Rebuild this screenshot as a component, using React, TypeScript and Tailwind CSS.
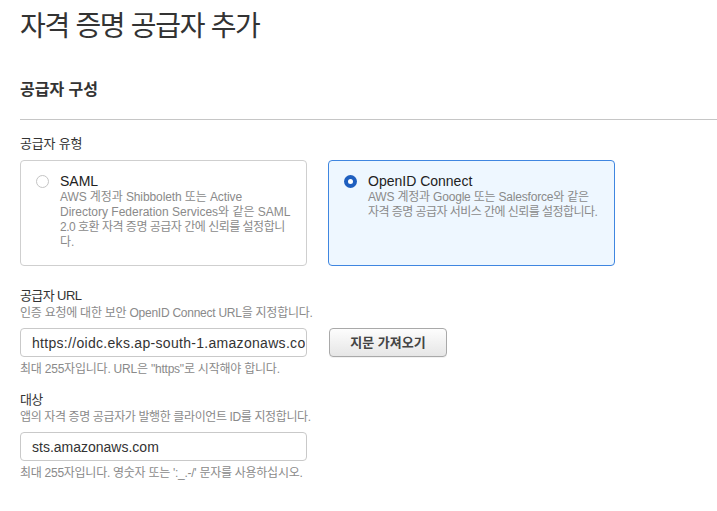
import React from 'react';

const font = { fontFamily: '"Liberation Sans", "Noto Sans CJK KR", sans-serif' };

type Line = { text: string; track: string };

function Radio({ checked }: { checked: boolean }) {
  if (checked) {
    return (
      <span className="mt-[2px] flex h-[13px] w-[13px] shrink-0 items-center justify-center rounded-full bg-[#1f5fbf]">
        <span className="h-[5px] w-[5px] rounded-full bg-white" />
      </span>
    );
  }
  return <span className="mt-[2px] h-[13px] w-[13px] shrink-0 rounded-full border border-[#c4c4c4] bg-white" />;
}

function ProviderCard({ title, lines, checked }: { title: string; lines: Line[]; checked: boolean }) {
  return (
    <div
      className={`flex h-[106px] w-[287px] gap-[11px] rounded-[4px] border pl-[15px] pt-[12px] ${
        checked ? 'border-[#3f86e0] bg-[#eef7ff]' : 'border-[#cfcfcf] bg-white'
      }`}
    >
      <Radio checked={checked} />
      <div>
        <div className="text-[14px] leading-[17px] text-[#222]">{title}</div>
        <div className="whitespace-nowrap text-[12px] leading-[15px] text-[#8a8a8a]">
          {lines.map((l) => (
            <div key={l.text} className={l.track}>
              {l.text}
            </div>
          ))}
        </div>
      </div>
    </div>
  );
}

function Field({
  label,
  help,
  helpTrack,
  value,
  valueTrack,
  hint,
  hintTrack,
  button,
}: {
  label: string;
  help: string;
  helpTrack: string;
  value: string;
  valueTrack: string;
  hint: string;
  hintTrack: string;
  button?: string;
}) {
  return (
    <div>
      <div className="text-[13px] leading-[18px] tracking-[-0.6px] text-[#333]">{label}</div>
      <div className={`whitespace-nowrap text-[12px] leading-[16px] text-[#8a8a8a] ${helpTrack}`}>{help}</div>
      <div className="mt-[7px] flex items-center gap-[22px]">
        <input
          readOnly
          value={value}
          className={`h-[29px] w-[287px] rounded-[4px] border border-[#c9c9c9] bg-white pl-[11px] pr-[1px] text-[14px] text-[#333] outline-none ${valueTrack}`}
          style={font}
        />
        {button && (
          <button
            className="h-[29px] w-[118px] rounded-[4px] border border-[#a9a9a9] bg-gradient-to-b from-[#fdfdfd] to-[#e6e6e6] text-[13px] font-bold text-[#444] shadow-[0_1px_0_rgba(0,0,0,0.05)]"
            style={font}
          >
            {button}
          </button>
        )}
      </div>
      <div className={`mt-[5px] whitespace-nowrap text-[12px] leading-[14px] text-[#8a8a8a] ${hintTrack}`}>{hint}</div>
    </div>
  );
}

export default function App() {
  return (
    <div className="min-h-screen w-[717px] overflow-hidden bg-white pl-5" style={font}>
      <h1 className="pt-[10px] text-[28px] leading-[34px] tracking-[-1.3px] text-[#333]">자격 증명 공급자 추가</h1>

      <div className="mt-[36px] border-b border-[#c6c6c6] pb-[19px]">
        <h2 className="text-[16px] font-bold leading-[20px] text-[#333]">공급자 구성</h2>
      </div>

      <div className="mt-[15px] text-[13px] leading-[18px] tracking-[-0.2px] text-[#333]">공급자 유형</div>

      <div className="mt-[7px] flex gap-[21px]">
        <ProviderCard
          title="SAML"
          checked={false}
          lines={[
            { text: 'AWS 계정과 Shibboleth 또는 Active', track: 'tracking-[-0.1px]' },
            { text: 'Directory Federation Services와 같은 SAML', track: 'tracking-[0px]' },
            { text: '2.0 호환 자격 증명 공급자 간에 신뢰를 설정합니', track: 'tracking-[-0.5px]' },
            { text: '다.', track: 'tracking-[0px]' },
          ]}
        />
        <ProviderCard
          title="OpenID Connect"
          checked
          lines={[
            { text: 'AWS 계정과 Google 또는 Salesforce와 같은', track: 'tracking-[-0.2px]' },
            { text: '자격 증명 공급자 서비스 간에 신뢰를 설정합니다.', track: 'tracking-[-0.55px]' },
          ]}
        />
      </div>

      <div className="mt-[21px]">
        <Field
          label="공급자 URL"
          help="인증 요청에 대한 보안 OpenID Connect URL을 지정합니다."
          helpTrack="tracking-[-0.25px]"
          value="https://oidc.eks.ap-south-1.amazonaws.com/id/8A2F1C"
          valueTrack="tracking-[0.3px]"
          hint={'최대 255자입니다. URL은 "https"로 시작해야 합니다.'}
          hintTrack="tracking-[-0.22px]"
          button="지문 가져오기"
        />
      </div>

      <div className="mt-[15px]">
        <Field
          label="대상"
          help="앱의 자격 증명 공급자가 발행한 클라이언트 ID를 지정합니다."
          helpTrack="tracking-[-0.38px]"
          value="sts.amazonaws.com"
          valueTrack="tracking-[0px]"
          hint="최대 255자입니다. 영숫자 또는 ':_.-/' 문자를 사용하십시오."
          hintTrack="tracking-[-0.27px]"
        />
      </div>
    </div>
  );
}
